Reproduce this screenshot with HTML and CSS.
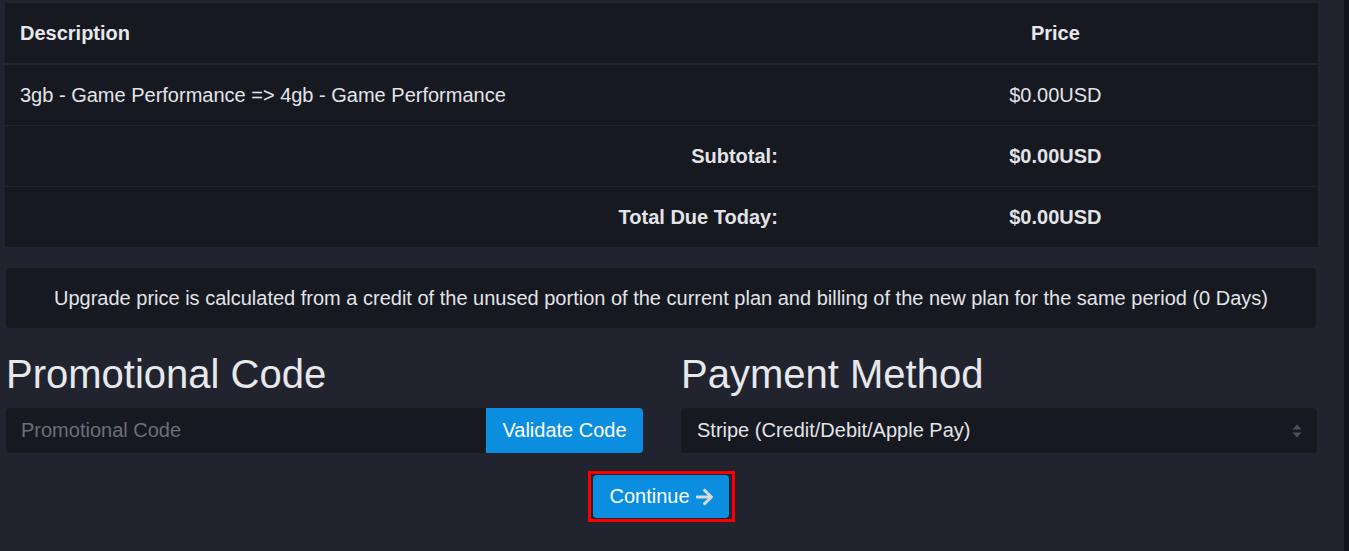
FILE: index.html
```html
<!DOCTYPE html>
<html lang="en">
<head>
<meta charset="utf-8">
<title>Upgrade Summary</title>
<link rel="stylesheet" href="styles.css">
</head>
<body>
<div class="page">
  <main class="content">
    <table class="summary">
      <thead>
        <tr>
          <th class="col-desc">Description</th>
          <th class="col-price">Price</th>
        </tr>
      </thead>
      <tbody>
        <tr>
          <td class="desc">3gb - Game Performance =&gt; 4gb - Game Performance</td>
          <td class="price">$0.00USD</td>
        </tr>
        <tr>
          <td class="label">Subtotal:</td>
          <td class="price strong">$0.00USD</td>
        </tr>
        <tr>
          <td class="label">Total Due Today:</td>
          <td class="price strong">$0.00USD</td>
        </tr>
      </tbody>
    </table>

    <div class="note">Upgrade price is calculated from a credit of the unused portion of the current plan and billing of the new plan for the same period (0 Days)</div>

    <div class="cols">
      <section class="col">
        <h2 class="heading">Promotional Code</h2>
        <div class="input-group">
          <input class="promo-input" type="text" placeholder="Promotional Code">
          <button class="btn validate" type="button">Validate Code</button>
        </div>
      </section>
      <section class="col">
        <h2 class="heading">Payment Method</h2>
        <div class="select">
          <span class="select-text">Stripe (Credit/Debit/Apple Pay)</span>
          <svg class="select-arrows" width="10" height="14" viewBox="0 0 10 14" aria-hidden="true">
            <path d="M5 0.5 L9.5 5.5 L0.5 5.5 Z" fill="#4b4f59"/>
            <path d="M0.5 8.5 L9.5 8.5 L5 13.5 Z" fill="#4b4f59"/>
          </svg>
        </div>
      </section>
    </div>

    <div class="actions">
      <div class="highlight">
        <button class="btn continue" type="button">Continue
          <svg class="arrow" width="17" height="20" viewBox="0 0 448 512" aria-hidden="true">
            <path fill="#d6d9de" d="M190.5 66.9l22.2-22.2c9.4-9.4 24.6-9.4 33.9 0L441 239c9.4 9.4 9.4 24.6 0 33.9L246.6 467.3c-9.4 9.4-24.6 9.4-33.9 0l-22.2-22.2c-9.5-9.5-9.3-25 .4-34.3L311.4 296H24c-13.3 0-24-10.7-24-24v-32c0-13.3 10.7-24 24-24h287.4L190.9 101.2c-9.8-9.3-10-24.8-.4-34.3z"/>
          </svg>
        </button>
      </div>
    </div>
  </main>
  <div class="rail"></div>
</div>
</body>
</html>
```

FILE: styles.css
```css
* { box-sizing: border-box; }

html, body {
  margin: 0;
  padding: 0;
  background: #21242e;
  height: 100%;
  overflow: hidden;
}

body {
  font-family: "Liberation Sans", Arial, sans-serif;
  font-size: 20px;
  color: #e2e4e8;
}

.page {
  display: flex;
  height: 551px;
}

.content {
  flex: 1;
  padding: 3px 26px 0 5px;
}

.rail {
  width: 5px;
  background: #101319;
}

/* table */
.summary {
  width: 100%;
  border-collapse: separate;
  border-spacing: 0;
  background: #161920;
}

.summary th,
.summary td {
  padding: 16px 15px;
  line-height: 28px;
  font-size: 20px;
  vertical-align: middle;
}

.summary th {
  font-weight: bold;
  border-bottom: 2px solid #22252f;
  color: #e6e8ec;
}

.summary .col-desc { width: 60%; text-align: left; }
.summary .col-price { width: 40%; text-align: center; }

.summary tbody tr:not(:last-child) td {
  border-bottom: 1px solid #22252f;
}

.summary .desc { text-align: left; }
.summary .label { text-align: right; font-weight: bold; }
.summary .price { text-align: center; }
.summary .strong { font-weight: bold; }

/* note */
.note {
  margin: 21px 2px 0 1px;
  padding: 16px 15px;
  line-height: 28px;
  background: #161920;
  border-radius: 4px;
  text-align: center;
  color: #e2e4e8;
}

/* two columns */
.cols {
  display: grid;
  grid-template-columns: 637px 636px;
  column-gap: 38px;
  margin: 0 1px;
}

.heading {
  margin: 22px 0 10px;
  font-size: 40px;
  line-height: 48px;
  font-weight: normal;
  color: #e6e8ec;
}

.input-group {
  display: flex;
  height: 45px;
}

.promo-input {
  flex: 1;
  min-width: 0;
  height: 45px;
  border: none;
  outline: none;
  background: #161920;
  border-radius: 4px 0 0 4px;
  padding: 0 15px;
  font-family: "Liberation Sans", Arial, sans-serif;
  font-size: 20px;
  color: #e2e4e8;
}

.promo-input::placeholder { color: #6a6f78; }

.btn {
  border: none;
  background: #0b8de0;
  color: #ffffff;
  font-family: "Liberation Sans", Arial, sans-serif;
  font-size: 20px;
  cursor: pointer;
}

.validate {
  width: 157px;
  height: 45px;
  padding: 0;
  border-radius: 0 4px 4px 0;
}

.select {
  display: flex;
  align-items: center;
  justify-content: space-between;
  height: 45px;
  padding: 0 15px 0 16px;
  background: #161920;
  border-radius: 4px;
  color: #e2e4e8;
}

.select-arrows { display: block; }

/* actions */
.actions {
  display: flex;
  justify-content: center;
  margin-top: 18px;
}

.highlight {
  display: flex;
  border: 3px solid #ff0000;
  padding: 1px 3px 1px 2px;
}

.continue {
  display: flex;
  align-items: center;
  gap: 6px;
  height: 43px;
  padding: 0 16px;
  border-radius: 4px;
}

.arrow { display: block; }
```
